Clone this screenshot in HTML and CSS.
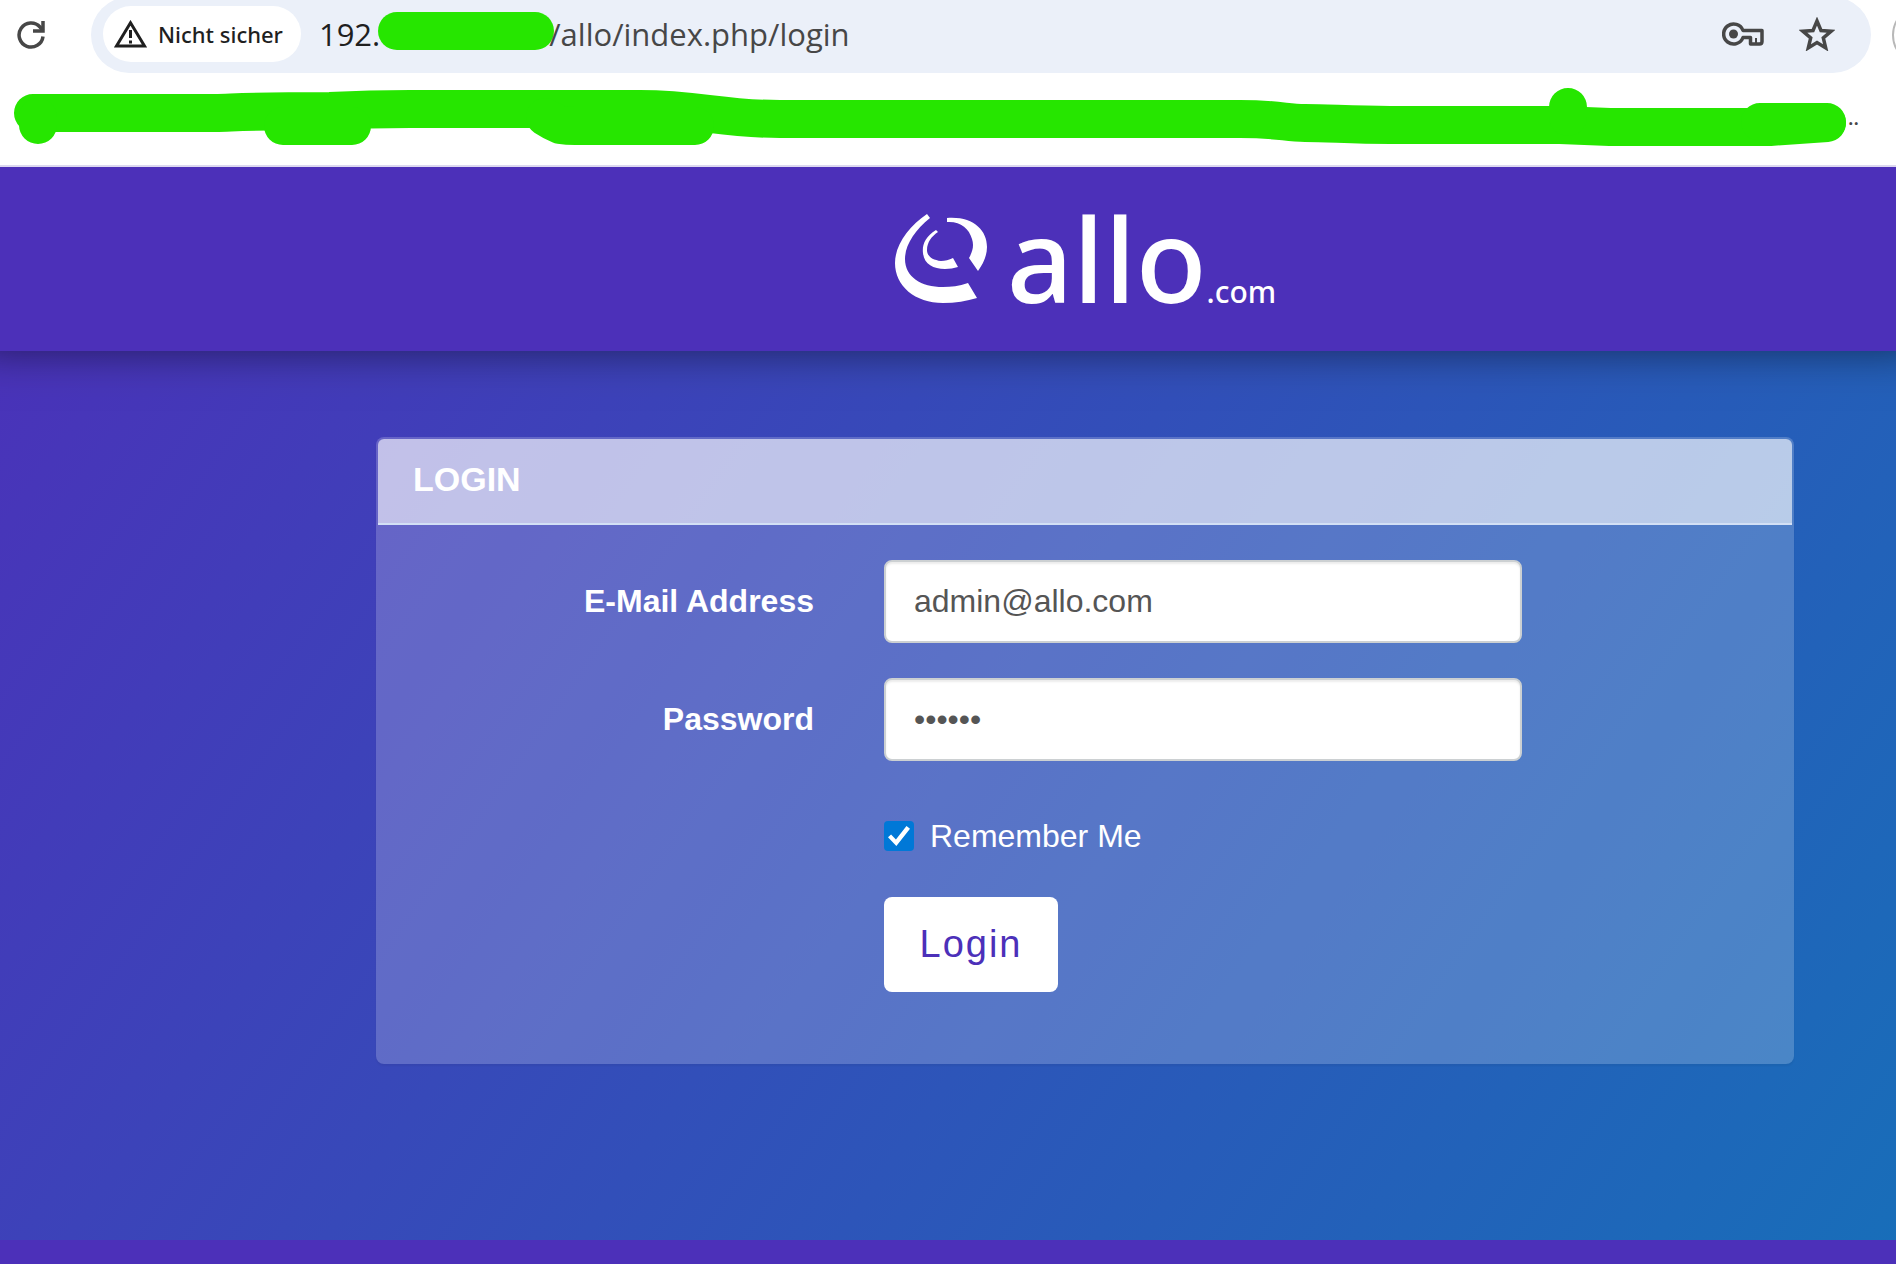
FILE: index.html
```html
<!DOCTYPE html>
<html lang="en">
<head>
  <meta charset="UTF-8">
  <meta name="viewport" content="width=device-width, initial-scale=1.0">
  <title>Login</title>
  <link rel="stylesheet" href="styles.css">
</head>
<body>
  <div class="browser">
    <div class="toolbar">
      <button class="icon-btn" type="button" aria-label="Reload">
        <svg width="28" height="28" viewBox="0 0 28 28" fill="none" stroke="#474747" stroke-width="3.500">
          <path d="M26 15.500a12 12 0 1 1-3-9.500l3 3.500"/>
          <path d="M26 0v10H16"/>
        </svg>
      </button>
      <div class="omnibox">
        <button class="chip" type="button">
          <svg width="33" height="28" viewBox="0 0 33 28">
            <path d="M16.500 2.800L30.500 26H2.500z" fill="none" stroke="#1f1f1f" stroke-width="3"/>
            <path d="M16.500 10v8M16.500 20.500v3" stroke="#1f1f1f" stroke-width="3"/>
          </svg>
          <span>Nicht sicher</span>
        </button>
        <div class="url"><span class="host">192.</span><span class="redacted"></span><span>/allo/index.php/login</span></div>
        <div class="actions">
          <button class="icon-btn" type="button" aria-label="Passwords">
            <svg width="42" height="24" viewBox="0 0 42 24" fill="none" stroke="#474747" stroke-width="3.500">
              <path d="M21 8.500a10 10 0 1 0 0 7h7.500v6.500h9q2.500 0 2.500-2.500v-11H21z" stroke-linejoin="round"/>
              <circle cx="11.500" cy="12" r="4.500" fill="#474747" stroke="none"/>
              <path d="M34 16v5" stroke-width="2"/>
            </svg>
          </button>
          <button class="icon-btn" type="button" aria-label="Bookmark">
            <svg width="36" height="34" viewBox="0 0 36 34">
              <path d="M18 4l4 9.500 10 .8-7.700 6.600 2.400 10L18 25.600l-8.700 5.300 2.400-10L4 14.300l10-.8z" fill="none" stroke="#474747" stroke-width="3.500"/>
            </svg>
          </button>
        </div>
      </div>
      <div class="avatar"></div>
    </div>
    <div class="bookmarks">
      <svg class="marker" viewBox="0 0 1848 92" preserveAspectRatio="none" fill="none" stroke="#26e600" stroke-width="38" stroke-linecap="round" stroke-linejoin="round">
        <path d="M33 40H215C245 39 250 38 330 38C350 37 370 36 410 36H640C700 36 720 46 780 46H1240C1280 46 1285 50 1305 50C1330 50 1350 52 1390 52H1560L1610 54H1770L1827 50"/>
        <path d="M38 52v-8M283 53h69M545 44Q551 48 560 52Q567 53 575 53H695M1568 34v10M1760 49h67"/>
      </svg>
      <span class="more">..</span>
    </div>
  </div>

  <div class="site">
    <header class="header">
      <a class="logo" href="#" aria-label="allo.com">
        <svg width="92" height="90" viewBox="0 0 92 90" fill="#fff">
          <path d="M32 1C14 13 0 32 0 50C0 73 20 90 48 90C60 90 72 88 82 85L73 70C64 73 56 74 48 74C26 74 10 64 10 46C10 32 20 17 35 5z"/>
          <path d="M52 5C78 3 92 17 92 34C92 43 88 51 83 58L74 45C78 38 79 32 77 26C74 15 65 8 52 9z"/>
          <path d="M41 17C30 24 27 32 28 40C29 51 38 56 50 56Q57 56 63 54L58 45C54 47 50 48 46 48C37 47 32 43 32 37C32 29 37 23 43 19z"/>
        </svg>
        <span class="logo-name">allo</span><span class="logo-tld">.com</span>
      </a>
    </header>

    <main class="main">
      <section class="panel">
        <h1 class="panel-heading">LOGIN</h1>
        <form class="panel-body">
          <label class="label" for="email">E-Mail Address</label>
          <input class="form-control" id="email" type="email" value="admin@allo.com">

          <label class="label" for="password">Password</label>
          <input class="form-control" id="password" type="password" value="secret">

          <label class="remember"><input class="check" type="checkbox" checked>Remember Me</label>
          <button class="btn" type="button">Login</button>
        </form>
      </section>
    </main>

    <footer class="footer"></footer>
  </div>
</body>
</html>
```

FILE: styles.css
```css
* {
  box-sizing: border-box;
}

body {
  margin: 0;
  min-height: 100vh;
  display: flex;
  flex-direction: column;
  font-family: "Liberation Sans", Arial, sans-serif;
  font-size: 32px;
  color: #fff;
}

button {
  border: 0;
  padding: 0;
  font: inherit;
  background: none;
}

svg {
  display: block;
}

/* Browser bar */
.browser {
  background: #fff;
  border-bottom: 2px solid #dcd8f0;
  font-family: "Open Sans", sans-serif;
  color: #474747;
}

.toolbar {
  display: flex;
  align-items: center;
  height: 73px;
  padding: 0 0 4px 17px;
  overflow: hidden;
}

.omnibox {
  flex: 1;
  align-self: flex-start;
  display: flex;
  align-items: center;
  height: 76px;
  margin: -3px 21px 0 46px;
  padding: 0 36px 2px 12px;
  border-radius: 38px;
  background: #ebf0f9;
}

.chip {
  display: flex;
  align-items: center;
  gap: 11px;
  height: 56px;
  padding: 0 18px 0 11px;
  border-radius: 28px;
  background: #fff;
  color: #1f1f1f;
  font-family: "Noto Sans", sans-serif;
  font-size: 22px;
  font-weight: 500;
}

.url {
  flex: 1;
  display: flex;
  align-items: center;
  margin-left: 18px;
  font-size: 31px;
  white-space: nowrap;
}

.host {
  color: #1f1f1f;
}

.redacted {
  width: 176px;
  height: 38px;
  margin: 0 -5px 6px -2px;
  border-radius: 19px;
  background: #26e600;
}

.actions {
  display: flex;
  align-items: center;
  gap: 35px;
}

.avatar {
  flex: none;
  width: 60px;
  height: 60px;
  margin-right: -56px;
  border: 2px solid #b8b8b8;
  border-radius: 50%;
}

.bookmarks {
  display: flex;
  height: 92px;
}

.marker {
  flex: 1;
  min-width: 0;
  height: 92px;
}

.more {
  width: 48px;
  padding-top: 30px;
  font-size: 20px;
  font-weight: 600;
  line-height: 30px;
}

.site {
  flex: 1;
  display: flex;
  flex-direction: column;
  overflow: hidden;
  background: linear-gradient(125deg, #4c30b9, #186eb9);
}

/* Site header */
.header {
  display: flex;
  justify-content: center;
  height: 184px;
  padding: 46px 0 0 275px;
  background: #4c30b9;
  box-shadow: 0 -24px 40px 24px rgba(0, 0, 0, 0.5);
}

.logo {
  display: flex;
  align-items: baseline;
  color: #fff;
  text-decoration: none;
  font-family: "Noto Sans", sans-serif;
}

.logo-name {
  margin-left: 20px;
  font-size: 116px;
  line-height: 90px;
  font-weight: 500;
}

.logo-tld {
  font-size: 30px;
  font-weight: 500;
}

/* Login form */
.main {
  flex: 1;
  padding: 86px 102px 0 376px;
}

.panel {
  border: 2px solid transparent;
  border-radius: 8px;
  background: rgba(255, 255, 255, 0.2);
  box-shadow: 0 2px 2px rgba(0, 0, 0, 0.05);
}

.panel-heading {
  margin: 0;
  height: 86px;
  padding: 20px 35px;
  border-bottom: 2px solid #d3e0f5;
  border-radius: 6px 6px 0 0;
  background: rgba(255, 255, 255, 0.6);
  font-size: 34px;
  line-height: 40px;
}

.panel-body {
  display: grid;
  grid-template-columns: 436px 638px;
  column-gap: 70px;
  row-gap: 35px;
  padding: 35px 0 70px;
}

.label {
  align-self: center;
  text-align: right;
  font-weight: bold;
}

.form-control {
  height: 83px;
  padding: 0 28px;
  border: 2px solid #ccd0d2;
  border-radius: 8px;
  background: #fff;
  box-shadow: inset 0 2px 2px rgba(0, 0, 0, 0.08);
  color: #555;
  font: inherit;
}

.remember {
  grid-column: 2;
  display: flex;
  align-items: center;
  gap: 16px;
  height: 66px;
  padding-top: 14px;
}

.check {
  appearance: none;
  width: 30px;
  height: 30px;
  margin: 0;
  border-radius: 4px;
  background: #0078d7;
}

.check:checked::before {
  content: "";
  display: block;
  width: 22px;
  height: 20px;
  margin: 5px 4px;
  background: #fff;
  clip-path: polygon(0 56%, 14% 42%, 36% 68%, 84% 0, 100% 14%, 38% 100%);
}

.btn {
  grid-column: 2;
  justify-self: start;
  width: 174px;
  height: 95px;
  border-radius: 8px;
  background: #fff;
  color: #4c30b9;
  font-size: 38px;
  letter-spacing: 2px;
}

.footer {
  height: 24px;
  background: #4c30b9;
}
```
